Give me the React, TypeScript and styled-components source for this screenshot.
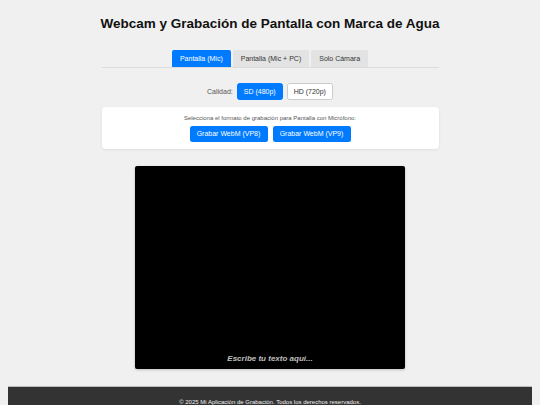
import styled, { createGlobalStyle } from 'styled-components'

const GlobalStyle = createGlobalStyle`
  body {
    margin: 0;
    background: #f0f0f0;
    font-family: 'Liberation Sans', Arial, sans-serif;
    color: #333;
  }
`

const tabs = ['Pantalla (Mic)', 'Pantalla (Mic + PC)', 'Solo Cámara']

const App = () => (
  <Page>
    <GlobalStyle />
    <Main>
      <Title>Webcam y Grabación de Pantalla con Marca de Agua</Title>
      <TabBar>
        {tabs.map((t, i) => (
          <Tab key={t} $active={i === 0}>
            {t}
          </Tab>
        ))}
      </TabBar>
      <Quality>
        <span>Calidad:</span>
        <QualityButton $active>SD (480p)</QualityButton>
        <QualityButton>HD (720p)</QualityButton>
      </Quality>
      <Card>
        <p>Selecciona el formato de grabación para Pantalla con Micrófono:</p>
        <ButtonRow>
          <RecordButton>Grabar WebM (VP8)</RecordButton>
          <RecordButton>Grabar WebM (VP9)</RecordButton>
        </ButtonRow>
      </Card>
      <Preview>
        <Caption>Escribe tu texto aquí...</Caption>
      </Preview>
    </Main>
    <Footer>© 2025 Mi Aplicación de Grabación. Todos los derechos reservados.</Footer>
  </Page>
)

const Page = styled.div`
  padding: 0 8px;
`

const Main = styled.main`
  width: 337px;
  margin: 0 auto;
  display: flex;
  flex-direction: column;
  align-items: center;
`

const Title = styled.h1`
  margin: 16px 0 0;
  font-size: 13.5px;
  line-height: 16px;
  font-weight: 700;
  color: #111;
  white-space: nowrap;
`

const TabBar = styled.nav`
  align-self: stretch;
  display: flex;
  justify-content: center;
  gap: 2px;
  margin-top: 18px;
  border-bottom: 1.5px solid #dcdcdc;
`

const Tab = styled.button<{ $active?: boolean }>`
  all: unset;
  height: 17px;
  padding: 0 8px;
  display: flex;
  align-items: center;
  font-size: 7px;
  border-radius: 2px 2px 0 0;
  background: ${({ $active }) => ($active ? '#007bff' : '#e3e3e3')};
  color: ${({ $active }) => ($active ? '#fff' : '#333')};
`

const Quality = styled.div`
  display: flex;
  align-items: center;
  gap: 4px;
  margin-top: 15px;
  font-size: 7px;
  color: #555;
`

const QualityButton = styled.button<{ $active?: boolean }>`
  all: unset;
  box-sizing: border-box;
  height: 16.5px;
  padding: 0 6px;
  display: flex;
  align-items: center;
  font-size: 7px;
  border-radius: 2.5px;
  border: 1px solid ${({ $active }) => ($active ? '#007bff' : '#ccc')};
  background: ${({ $active }) => ($active ? '#007bff' : '#fff')};
  color: ${({ $active }) => ($active ? '#fff' : '#333')};
`

const Card = styled.section`
  box-sizing: border-box;
  align-self: stretch;
  margin-top: 7px;
  height: 42px;
  padding: 8px 0 0;
  background: #fff;
  border-radius: 4px;
  box-shadow: 0 1px 3px rgba(0, 0, 0, 0.08);
  display: flex;
  flex-direction: column;
  align-items: center;

  > p {
    margin: 0;
    font-size: 6px;
    line-height: 7px;
    color: #555;
  }
`

const ButtonRow = styled.div`
  display: flex;
  gap: 5px;
  margin-top: 4px;
`

const RecordButton = styled.button`
  all: unset;
  box-sizing: border-box;
  width: 78px;
  height: 16px;
  display: flex;
  align-items: center;
  justify-content: center;
  font-size: 7px;
  color: #fff;
  background: #007bff;
  border-radius: 2.5px;
`

const Preview = styled.div`
  width: 270px;
  height: 203px;
  margin-top: 17px;
  background: #000;
  border-radius: 2px;
  box-shadow: 0 1px 3px rgba(0, 0, 0, 0.2);
  display: flex;
  align-items: flex-end;
  justify-content: center;
`

const Caption = styled.span`
  margin-bottom: 6px;
  font-size: 8px;
  font-weight: 700;
  font-style: italic;
  color: rgba(255, 255, 255, 0.75);
`

const Footer = styled.footer`
  margin-top: 17px;
  height: 40px;
  padding-top: 12px;
  box-sizing: border-box;
  background: #333;
  color: #eee;
  font-size: 6px;
  text-align: center;
  border-top: 1px solid #bbb;
`

export default App
